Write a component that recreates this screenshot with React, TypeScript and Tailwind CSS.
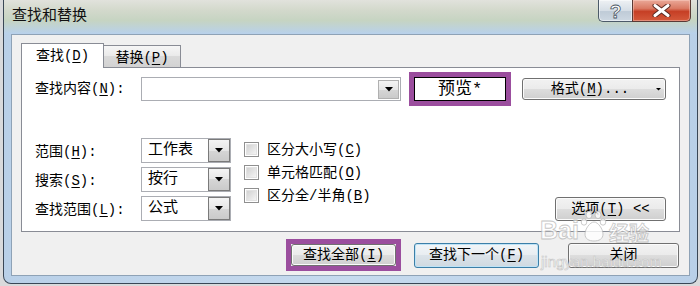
import React from "react";

const FONT = "font-['Liberation_Mono','Noto_Sans_CJK_SC',monospace]";
const BTN =
  "rounded-[3px] border border-[#707070] bg-[linear-gradient(#f2f2f2,#ebebeb_50%,#dddddd_50%,#cfcfcf)] shadow-[inset_0_0_0_1px_#fbfbfb]";

function U({ children }: { children: React.ReactNode }) {
  return <span className="underline decoration-1 underline-offset-[2px]">{children}</span>;
}

function Tri({ w = 8, h = 5 }: { w?: number; h?: number }) {
  return (
    <svg width={w} height={h} viewBox={`0 0 ${w} ${h}`} className="block">
      <path d={`M0 0H${w}L${w / 2} ${h - 0.5}Z`} fill="#000" />
    </svg>
  );
}

function Select({ value }: { value: string }) {
  return (
    <div className="w-[90px] h-[25px] border border-[#abadb3] bg-white flex items-center">
      <span className="pl-[6px] flex-1 text-[15px] leading-none">{value}</span>
      <div className="w-[22px] h-full border border-[#7a7a7a] bg-[linear-gradient(#f4f4f4,#e6e6e6_50%,#d6d6d6_50%,#cacaca)] flex items-center justify-center">
        <Tri />
      </div>
    </div>
  );
}

function Check({ children }: { children: React.ReactNode }) {
  return (
    <div className="h-[23px] flex items-center gap-[8px]">
      <div className="w-[15px] h-[15px] border border-[#8f8f8f] bg-white p-[1px]">
        <div className="w-full h-full border border-[#e2e2e2] bg-[linear-gradient(135deg,#d2d2d2,#f4f4f4)]" />
      </div>
      <span className="text-[14px] leading-none">{children}</span>
    </div>
  );
}

function Row({ label, children }: { label: React.ReactNode; children: React.ReactNode }) {
  return (
    <div className="h-[25px] flex items-center">
      <div className="w-[106px] text-[14px] leading-none pt-[2px]">{label}</div>
      {children}
    </div>
  );
}

export default function App() {
  return (
    <div className={`w-[700px] h-[286px] bg-[#d9dadc] overflow-hidden relative text-black ${FONT}`}>
      {/* window */}
      <div className="ml-[3px] w-[695px] h-[284px] border-x border-b border-[#3a4756] rounded-b-[8px] bg-[linear-gradient(90deg,#b9d0e8,#c6daee_50%,#b9d0e8)] flex flex-col overflow-hidden">
        {/* title bar */}
        <div className="h-[34px] shrink-0 flex items-start bg-[linear-gradient(#e1e2dc,#d3d9cc_30%,#c6d4c2_60%,#b8d1ec)]">
          <div className="pl-[8px] pt-[6px] text-[15px] leading-none font-['Noto_Sans_CJK_SC',sans-serif] text-[#111]">
            查找和替换
          </div>
          <div className="ml-auto mr-[6px] flex h-[22px]">
            <div className="w-[34px] h-[22px] border-l border-b border-[#4c5a69] rounded-bl-[5px] bg-[linear-gradient(#eef1f4,#d6dee6_50%,#bfcbd7_55%,#cdd8e2)] flex items-center justify-center shadow-[inset_0_0_0_1px_rgba(255,255,255,0.5)]">
              <span className="text-[19px] leading-none font-bold text-white font-['Liberation_Sans',sans-serif] [-webkit-text-stroke:0.8px_#4a5563] pt-[1px]">
                ?
              </span>
            </div>
            <div className="w-[59px] h-[22px] border-x border-b border-[#5a3a35] rounded-br-[5px] bg-[linear-gradient(#eaa898,#da7a64_40%,#c63f25_55%,#d45a3c)] flex items-center justify-center shadow-[inset_0_0_0_1px_rgba(255,220,210,0.4)]">
              <svg width="19" height="13" viewBox="0 0 19 13">
                <path d="M3 1.5L16 11.5M16 1.5L3 11.5" stroke="#5b2a22" strokeWidth="5" strokeLinecap="round" />
                <path d="M3 1.5L16 11.5M16 1.5L3 11.5" stroke="#ffffff" strokeWidth="3" strokeLinecap="round" />
              </svg>
            </div>
          </div>
        </div>

        {/* client area */}
        <div className="mx-[7px] h-[242px] shrink-0 bg-[#f0f0f0] border border-[#8ea2b6] flex flex-col">
          {/* tabs */}
          <div className="mt-[8px] ml-[9px] -mb-px flex items-end relative z-10">
            <div className="w-[83px] h-[25px] border border-b-0 border-[#898c95] bg-white flex items-center justify-center text-[14px] leading-none pb-[1px]">
              查找(<U>D</U>)
            </div>
            <div className="w-[77px] h-[23px] border border-l-0 border-[#898c95] bg-[linear-gradient(#f6f6f6,#e9e9e9_50%,#dadada_50%,#d2d2d2)] flex items-center justify-center text-[14px] leading-none pt-[2px]">
              替换(<U>P</U>)
            </div>
          </div>

          {/* panel */}
          <div className="mx-[9px] h-[165px] shrink-0 border border-[#898c95] bg-white flex flex-col px-[13px]">
            <div className="mt-[4px] h-[34px] flex items-center">
              <div className="w-[106px] text-[14px] leading-none">
                查找内容(<U>N</U>):
              </div>
              <div className="w-[260px] h-[24px] border border-[#abadb3] bg-white flex items-center justify-end pr-px">
                <div className="w-[21px] h-[19px] border border-[#b0b0b0] bg-[linear-gradient(#f4f4f4,#e6e6e6_50%,#d6d6d6_50%,#cacaca)] flex items-center justify-center">
                  <Tri />
                </div>
              </div>
              <div className="ml-[8px] w-[102px] h-[34px] border-[5px] border-[#9b4e9e] bg-white">
                <div className="w-full h-full border border-black flex items-center justify-center text-[17px] leading-none">
                  预览*
                </div>
              </div>
              <div className={`ml-[11px] w-[144px] h-[22px] relative flex items-center justify-center text-[14px] leading-none ${BTN}`}>
                <span className="mr-[8px]">
                  格式(<U>M</U>)...
                </span>
                <span className="absolute right-[4px] top-[9px]">
                  <Tri w={5} h={3} />
                </span>
              </div>
            </div>

            <div className="mt-[32px] flex">
              <div className="flex flex-col gap-[4px]">
                <Row label={<>范围(<U>H</U>):</>}>
                  <Select value="工作表" />
                </Row>
                <Row label={<>搜索(<U>S</U>):</>}>
                  <Select value="按行" />
                </Row>
                <Row label={<>查找范围(<U>L</U>):</>}>
                  <Select value="公式" />
                </Row>
              </div>
              <div className="ml-[13px] flex flex-col">
                <Check>
                  区分大小写(<U>C</U>)
                </Check>
                <Check>
                  单元格匹配(<U>O</U>)
                </Check>
                <Check>
                  区分全/半角(<U>B</U>)
                </Check>
              </div>
              <div className="flex-1" />
              <div className={`self-end w-[111px] h-[24px] flex items-center justify-center text-[14px] leading-none ${BTN}`}>
                选项(<U>T</U>) &lt;&lt;
              </div>
            </div>
          </div>

          {/* bottom buttons */}
          <div className="mt-[7px] h-[32px] flex items-center justify-end pr-[10px]">
            <div className="w-[115px] h-[32px] border-[5px] border-[#9b4e9e]">
              <div className={`w-full h-full flex items-center justify-center text-[14px] leading-none ${BTN}`}>
                查找全部(<U>I</U>)
              </div>
            </div>
            <div className="ml-[13px] w-[125px] h-[25px] rounded-[3px] border border-[#3c7fa8] bg-[linear-gradient(#f1f5f8,#e8edf1_50%,#dbe3e9_50%,#cfd9e1)] shadow-[inset_0_0_0_1px_#bfe3f6] flex items-center justify-center text-[14px] leading-none">
              查找下一个(<U>F</U>)
            </div>
            <div className={`ml-[29px] w-[111px] h-[25px] flex items-center justify-center text-[14px] leading-none ${BTN}`}>
              关闭
            </div>
          </div>
        </div>
      </div>

      {/* Baidu watermark overlay */}
      <div className="absolute left-[540px] top-[207px] flex items-end pointer-events-none opacity-80">
        <span className="text-[25px] leading-none font-bold font-['Liberation_Sans',sans-serif] text-white [-webkit-text-stroke:0.8px_#b8b8b8]">
          Bai
        </span>
        <svg width="28" height="36" viewBox="0 0 28 36" className="mx-[1px]">
          <g fill="#ffffff" stroke="#b8b8b8" strokeWidth="0.9">
            <ellipse cx="9" cy="8" rx="3" ry="3.6" />
            <ellipse cx="18" cy="8" rx="3" ry="3.6" />
            <ellipse cx="4" cy="15" rx="2.8" ry="3.2" />
            <ellipse cx="23" cy="15" rx="2.8" ry="3.2" />
            <path d="M14 15c4 0 9 7 9 12 0 5-4 7-9 7s-9-2-9-7c0-5 5-12 9-12z" />
          </g>
        </svg>
        <span className="text-[20px] leading-none font-bold font-['Noto_Sans_CJK_SC',sans-serif] text-white [-webkit-text-stroke:0.8px_#b8b8b8]">
          经验
        </span>
      </div>
      <div className="absolute left-[541px] top-[254px] pointer-events-none text-[15px] leading-none font-['Liberation_Sans',sans-serif] text-white/80 [-webkit-text-stroke:0.6px_#c4c4c4]">
        jingyan.baidu.com
      </div>
    </div>
  );
}
